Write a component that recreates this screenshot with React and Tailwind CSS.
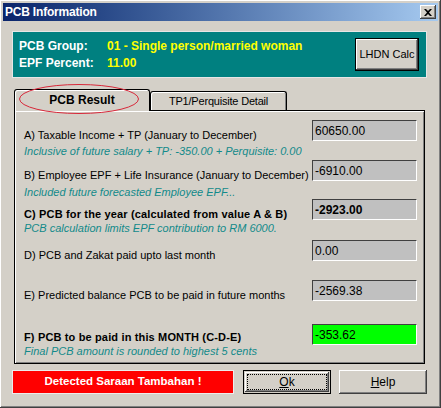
import React from 'react'

const FONT = { fontFamily: '"Liberation Sans", Arial, sans-serif' }

const raised = 'shadow-[inset_-1px_-1px_#404040,inset_1px_1px_#ffffff,inset_-2px_-2px_#808080]'

const ValueBox = ({ value, bold, green }) => (
  <div
    className={`w-[105px] h-[21px] shrink-0 flex items-center pl-[2px] text-[12px] text-black border-t border-l border-t-[#404040] border-l-[#404040] border-b border-r border-b-white border-r-white ${green ? 'bg-[#00ff00]' : 'bg-[#c0c0c0]'} ${bold ? 'font-bold' : ''}`}
  >
    {value}
  </div>
)

const Row = ({ label, note, value, bold, boldValue, green, h, pt, noteMt = 0 }) => (
  <div className="flex justify-between" style={{ height: h }}>
    <div className="whitespace-nowrap" style={{ paddingTop: pt }}>
      <div className={`text-[11px] leading-[14px] text-black ${bold ? 'font-bold tracking-[0.15px]' : ''}`}>{label}</div>
      {note && (
        <div className="text-[11px] leading-[14px] italic text-[#128a8a]" style={{ marginTop: noteMt }}>
          {note}
        </div>
      )}
    </div>
    <ValueBox value={value} bold={boldValue} green={green} />
  </div>
)

export default function App() {
  return (
    <div className="w-[441px] h-[408px] bg-[#d4d0c8] relative overflow-hidden" style={FONT}>
      <div className="absolute inset-0 pointer-events-none shadow-[inset_-1px_-1px_#404040,inset_1px_1px_#ffffff,inset_-2px_-2px_#808080]" />
      <div className="p-[3px] pb-0 flex flex-col">
        {/* title bar */}
        <div className="h-[18px] flex items-center justify-between pl-[2px] pr-[2px] bg-gradient-to-r from-[#0a246a] to-[#a6caf0]">
          <span className="text-white font-bold text-[12px] leading-none tracking-[-0.2px]">PCB Information</span>
          <div className={`w-[16px] h-[14px] bg-[#d4d0c8] flex items-center justify-center ${raised}`}>
            <svg width="8" height="7" viewBox="0 0 8 7">
              <path d="M0 0h2l2 2 2-2h2L5 3.5 8 7H6L4 5 2 7H0l3-3.5z" fill="#000" />
            </svg>
          </div>
        </div>

        <div className="pl-[9px] pr-[11px]">
          {/* teal header */}
          <div className="mt-[10px] h-[47px] bg-[#008080] border border-[#e6e6e6] flex items-center justify-between pl-[6px] pr-[7px]">
            <div className="flex flex-col gap-[3px] text-[12px] font-bold leading-[14px] whitespace-nowrap">
              <div className="flex">
                <span className="w-[88px] text-white">PCB Group:</span>
                <span className="text-[#ffff00]">01 - Single person/married woman</span>
              </div>
              <div className="flex">
                <span className="w-[88px] text-white">EPF Percent:</span>
                <span className="text-[#ffff00]">11.00</span>
              </div>
            </div>
            <div className={`w-[64px] h-[33px] bg-[#d4d0c8] border border-black flex items-center justify-center text-[11px] text-black whitespace-nowrap ${raised}`}>
              LHDN Calc
            </div>
          </div>

          {/* tabs */}
          <div className="mt-[11px] mx-[2px] relative">
            <div className="flex items-end h-[21px] relative z-10">
              <div className="w-[136px] h-[22px] mb-[-1px] bg-[#d4d0c8] border border-b-0 border-black rounded-t-[3px] shadow-[inset_1px_1px_#ffffff] flex items-center justify-center pb-[2px] text-[12px] font-bold text-black">
                PCB Result
              </div>
              <div className="w-[137px] h-[19px] bg-[#d4d0c8] border border-b-0 border-black rounded-t-[3px] shadow-[inset_1px_1px_#ffffff,inset_-1px_0_#808080] flex items-center justify-center text-[11px] tracking-[-0.2px] text-black whitespace-nowrap">
                TP1/Perquisite Detail
              </div>
            </div>
            <svg className="absolute left-[3px] top-[-6px] z-20 pointer-events-none" width="124" height="32" viewBox="0 0 124 32">
              <ellipse cx="62" cy="16" rx="59.5" ry="14.5" fill="none" stroke="#d8283a" strokeWidth="1" />
            </svg>

            {/* panel */}
            <div className="h-[254px] border border-black shadow-[inset_1px_1px_#ffffff,inset_-1px_-1px_#808080] pt-[9px] pl-[9px] pr-[7px]">
              <Row
                h={40}
                pt={8}
                noteMt={2}
                label="A) Taxable Income + TP (January to December)"
                note="Inclusive of future salary + TP: -350.00 + Perquisite: 0.00"
                value="60650.00"
              />
              <Row
                h={39}
                pt={8}
                noteMt={3}
                label="B) Employee EPF + Life Insurance (January to December)"
                note="Included future forecasted Employee EPF..."
                value="-6910.00"
              />
              <Row
                h={41}
                pt={8}
                bold
                boldValue
                label="C) PCB for the year (calculated from value A & B)"
                note="PCB calculation limits EPF contribution to RM 6000."
                value="-2923.00"
              />
              <Row h={40} pt={8} label="D) PCB and Zakat paid upto last month" value="0.00" />
              <Row h={44} pt={8} label="E) Predicted balance PCB to be paid in future months" value="-2569.38" />
              <Row
                h={40}
                pt={6}
                bold
                green
                label="F) PCB to be paid in this MONTH (C-D-E)"
                note="Final PCB amount is rounded to highest 5 cents"
                value="-353.62"
              />
            </div>
          </div>

          {/* bottom buttons */}
          <div className="mt-[6px] flex h-[24px]">
            <div className="w-[222px] bg-[#ff0000] border border-[#ececec] flex items-center justify-center text-white font-bold text-[11.5px]">
              Detected Saraan Tambahan !
            </div>
            <div className="ml-[9px] w-[88px] border border-black bg-[#d4d0c8] p-[1px]">
              <div className={`h-full w-full flex items-center justify-center ${raised}`}>
                <div className="w-[80px] h-[16px] border border-dotted border-black flex items-center justify-center text-[12px] text-black">
                  <span><span className="underline">O</span>k</span>
                </div>
              </div>
            </div>
            <div className={`ml-[8px] w-[88px] bg-[#d4d0c8] flex items-center justify-center text-[12px] text-black ${raised}`}>
              <span><span className="underline">H</span>elp</span>
            </div>
          </div>
        </div>
      </div>
    </div>
  )
}
